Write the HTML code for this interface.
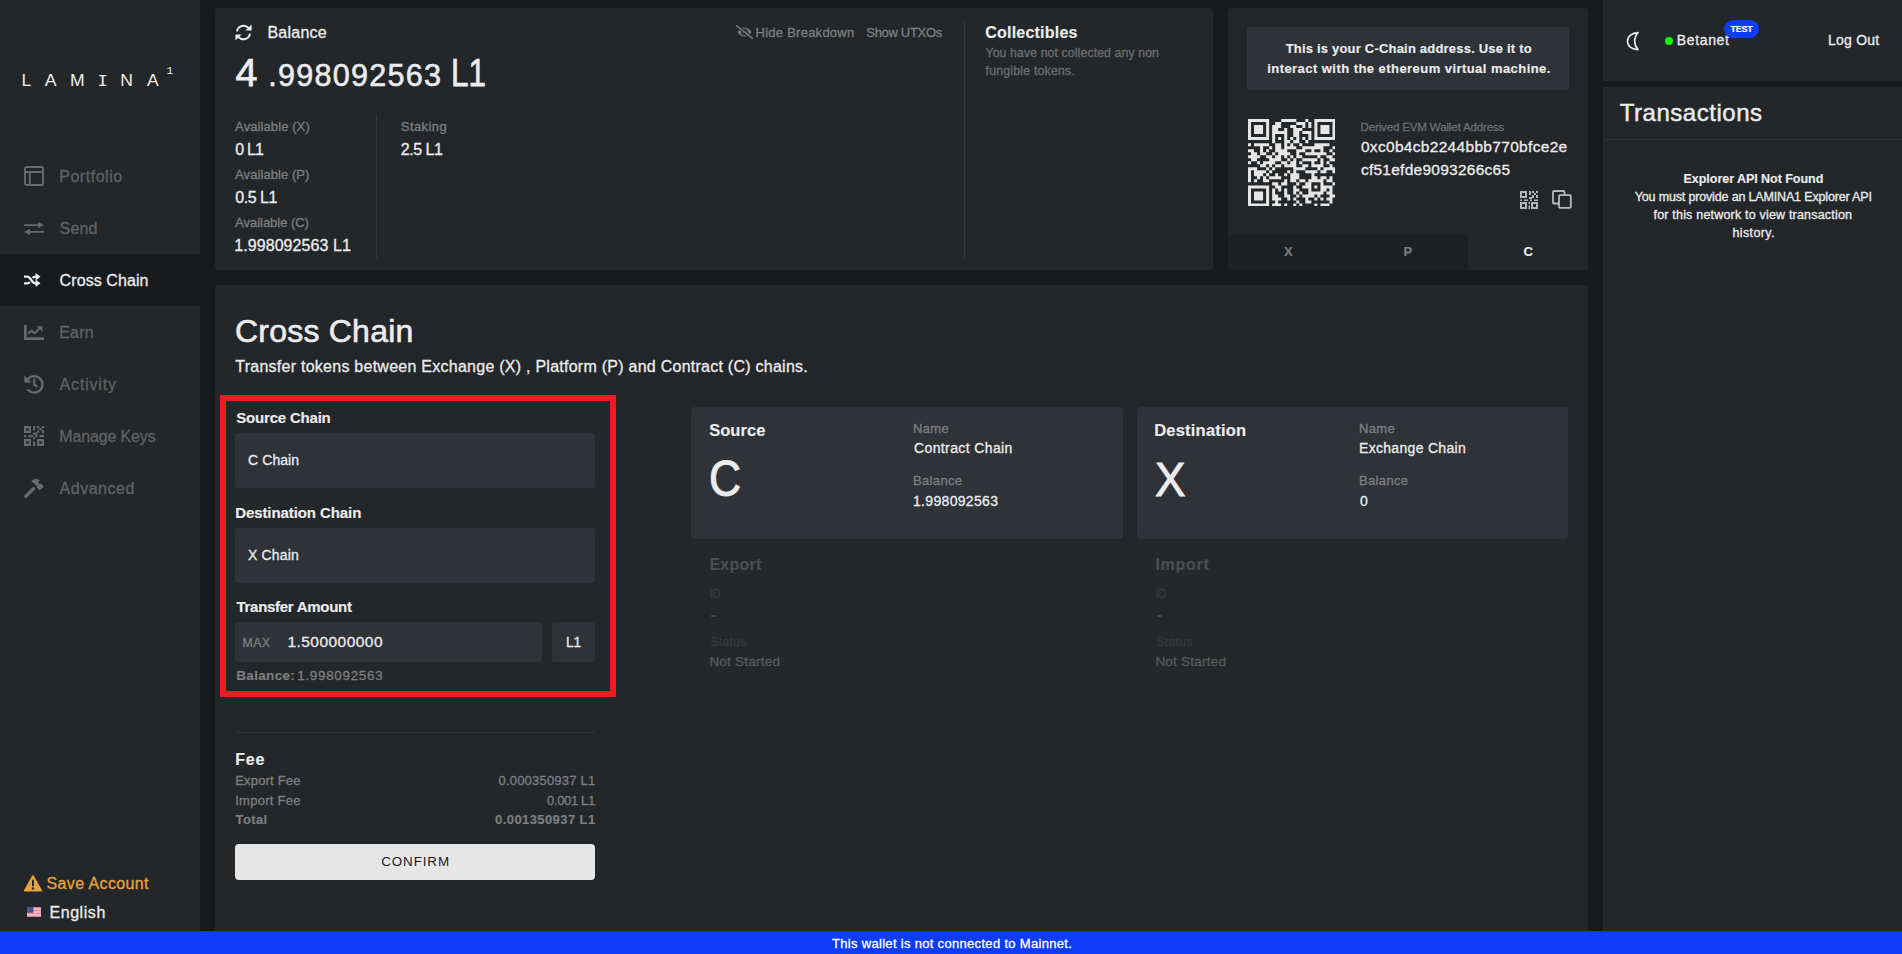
<!DOCTYPE html>
<html lang="en">
<head>
<meta charset="utf-8">
<title>LAMINA1 Wallet - Cross Chain</title>
<style>
*{box-sizing:border-box;margin:0;padding:0}
html,body{width:1902px;height:954px;overflow:hidden;background:#181b1e}
body{position:relative;font-family:"Liberation Sans",sans-serif;color:#ececee}
.t{position:absolute;color:inherit;white-space:nowrap;line-height:1;margin:0;padding:0;border:0;background:none;font-family:inherit;text-decoration:none;display:block;transform-origin:0 50%;-webkit-text-stroke:0.3px}
h1.t,h2.t,h3.t,h4.t{font-weight:400}
</style>
</head>
<body>
<nav id="sidebar">
<div style="position:absolute;left:0px;top:0px;width:200px;height:931px;background:#242729;"></div>
<svg style="position:absolute;left:0;top:55px" width="200" height="40" viewBox="0 55 200 40"><g font-family='"Liberation Sans", sans-serif' font-size="16" fill="#ececee" transform="scale(1.1,1)"><text y="85.6" x="19.6 40.8 63.6">LAM</text><text y="85.6" x="109.3 133.7">NA</text></g><text font-family='"Liberation Mono", monospace' font-size="16.4" fill="#ececee" text-anchor="middle" transform="scale(1.05,1)" x="97.76" y="85.6">I</text><text font-family='"Liberation Mono", monospace' font-size="11.2" fill="#ececee" x="166.4" y="74.1">1</text></svg>
<svg style="position:absolute;left:24px;top:166px;" width="20" height="20" viewBox="0 0 20 20"><rect x="1" y="1" width="18" height="18" rx="1.6" fill="none" stroke="#696a6b" stroke-width="1.9"/><path d="M1 6H19M5.8 6V19" stroke="#696a6b" stroke-width="1.8" fill="none"/></svg>
<a class="t" style="top:169.00px;font-size:16px;color:#5f6266;left:59.20px;letter-spacing:0.537px;">Portfolio</a>
<svg style="position:absolute;left:24px;top:221.6px;" width="20" height="13" viewBox="0 0 20 13"><path d="M0 3.1H15M20 9.9H5" stroke="#696a6b" stroke-width="1.9" fill="none"/><path d="M14 0L20 3.1L14 6.2ZM6 6.8L0 9.9L6 13Z" fill="#696a6b"/></svg>
<a class="t" style="top:221.00px;font-size:16px;color:#5f6266;left:59.60px;letter-spacing:0.174px;">Send</a>
<div style="position:absolute;left:0px;top:254px;width:200px;height:52px;background:#181b1e;"></div>
<svg style="position:absolute;left:24px;top:273px;" width="17" height="14" viewBox="0 0 17 14"><path d="M0 3.7H3.2C4.6 3.7 5.2 4.2 6 5.3L8.6 8.7C9.4 9.8 10 10.3 11.4 10.3H12.4M0 10.3H3.2C4.6 10.3 5.2 9.8 5.8 9M8.8 5C9.4 4.2 10 3.7 11.4 3.7H12.4" stroke="#ececee" stroke-width="2.3" fill="none"/><path d="M11.6 0V7.4L16.5 3.7ZM11.6 6.6V14L16.5 10.3Z" fill="#ececee"/></svg>
<a class="t" style="top:273.00px;font-size:16px;left:59.60px;letter-spacing:0.087px;">Cross Chain</a>
<svg style="position:absolute;left:24px;top:324.8px;" width="20" height="15" viewBox="0 0 20 15"><path d="M1.35 0V13.65H20" stroke="#696a6b" stroke-width="2.7" fill="none"/><path d="M4.6 8.2L7.6 5.4L10.4 8.4L15.6 3.6" stroke="#696a6b" stroke-width="2" fill="none" stroke-linecap="round" stroke-linejoin="round"/><path d="M12.8 1.2H18.4V6.8Z" fill="#696a6b"/></svg>
<a class="t" style="top:325.00px;font-size:16px;color:#5f6266;left:59.20px;letter-spacing:0.201px;">Earn</a>
<svg style="position:absolute;left:24px;top:374px;" width="20" height="20" viewBox="0 0 20 20"><path d="M3 6.6A8.2 8.2 0 1 1 4.2 16" stroke="#696a6b" stroke-width="2.3" fill="none" stroke-linecap="round"/><path d="M0.4 1.6V8.4H7.4Z" fill="#696a6b"/><path d="M10.2 5.6V10.4L12.6 12.3" stroke="#696a6b" stroke-width="2.2" fill="none" stroke-linecap="round"/></svg>
<a class="t" style="top:377.00px;font-size:16px;color:#5f6266;left:59.60px;letter-spacing:0.818px;">Activity</a>
<svg style="position:absolute;left:24px;top:426px;" width="20" height="20" viewBox="0 0 20 20"><g fill="#696a6b"><path fill-rule="evenodd" d="M0 0h7v7h-7zM2.3 2.3v2.4h2.4v-2.4z"/><path fill-rule="evenodd" d="M13 13h7v7h-7zM15.3 15.3v2.4h2.4v-2.4z"/><path fill-rule="evenodd" d="M0 13h7v7h-7zM2.3 15.3v2.4h2.4v-2.4z"/><rect x="9" y="0" width="2.2" height="4.4"/><rect x="13" y="0" width="2.2" height="2.2"/><rect x="17.8" y="0" width="2.2" height="2.2"/><rect x="13" y="4.4" width="2.2" height="2.6"/><rect x="15.2" y="2.2" width="2.6" height="2.2"/><rect x="17.8" y="4.4" width="2.2" height="2.6"/><rect x="9" y="6.6" width="4" height="2.2"/><rect x="0" y="9" width="2.2" height="2.2"/><rect x="4.4" y="9" width="4.6" height="2.2"/><rect x="11" y="9" width="2.2" height="2.2"/><rect x="15.4" y="9" width="4.6" height="2.2"/><rect x="9" y="11.2" width="2.2" height="2.2"/><rect x="9" y="15.4" width="2.2" height="4.6"/></g></svg>
<a class="t" style="top:429.00px;font-size:16px;color:#5f6266;left:59.20px;letter-spacing:-0.134px;">Manage Keys</a>
<svg style="position:absolute;left:24px;top:477.5px;" width="20" height="20" viewBox="0 0 20 20"><path d="M0.6 17.3L9.3 8.6L11.6 10.9L2.9 19.6C2.2 20.2 1.2 20.2 0.6 19.6C0 19 0 18 0.6 17.3Z" fill="#696a6b"/><path d="M7.2 3.2C9.8 0.4 13.6 0.2 16.2 2.6L14.7 3.1C14.2 3.6 14.2 4.4 14.7 4.9L15.8 6L16.8 5.4L19.8 8.4L15.6 12.6L12.6 9.6L13.2 8.6L10.8 6.2C9.8 5.2 8.6 4.2 7.2 3.2Z" fill="#696a6b"/></svg>
<a class="t" style="top:481.00px;font-size:16px;color:#5f6266;left:59.60px;letter-spacing:0.504px;">Advanced</a>
<svg style="position:absolute;left:24px;top:874.5px;" width="18" height="17" viewBox="0 0 18 17"><path d="M9 1.2L17 15.6H1Z" fill="#e6a23c" stroke="#e6a23c" stroke-width="2" stroke-linejoin="round"/><path d="M9 5.4V10.6" stroke="#242729" stroke-width="2" stroke-linecap="round"/><circle cx="9" cy="13.4" r="1.2" fill="#242729"/></svg>
<a class="t" style="top:876.00px;font-size:16px;color:#e6a23c;left:46.50px;letter-spacing:0.382px;">Save Account</a>
<svg style="position:absolute;left:27px;top:907px;border-radius:1.5px;" width="14" height="10" viewBox="0 0 14 10"><rect width="14" height="10" fill="#ecd0d4"/><rect y="0.00" width="14" height="1.43" fill="#e6828e"/><rect y="2.86" width="14" height="1.43" fill="#e6828e"/><rect y="5.71" width="14" height="1.43" fill="#e6828e"/><rect y="8.57" width="14" height="1.43" fill="#e6828e"/><rect width="6.4" height="5.7" fill="#46508a"/></svg>
<div class="t" style="top:905.00px;font-size:16px;left:49.50px;letter-spacing:0.552px;">English</div>
</nav>
<section id="balance-card">
<div style="position:absolute;left:215px;top:8px;width:998px;height:262px;background:#242729;border-radius:4px;"></div>
<svg style="position:absolute;left:234.5px;top:23.5px;" width="17" height="17" viewBox="0 0 17 17"><path d="M2 7.4A6.6 6.6 0 0 1 13.6 4.2M15 9.6A6.6 6.6 0 0 1 3.4 12.8" stroke="#ececee" stroke-width="2" fill="none"/><path d="M16.6 0.4V6.6H10.4ZM0.4 16.6V10.4H6.6Z" fill="#ececee"/></svg>
<h4 class="t" style="top:25.00px;font-size:16px;left:267.40px;letter-spacing:0.245px;font-weight:400;">Balance</h4>
<div class="t" style="top:53.00px;font-size:39.5px;-webkit-text-stroke:0.75px;left:235.50px;">4</div>
<div class="t" style="top:60.00px;font-size:30.6px;-webkit-text-stroke:0.58px;left:268.20px;letter-spacing:1.242px;">.998092563</div>
<div class="t" style="top:53.00px;font-size:39.5px;-webkit-text-stroke:0.75px;left:450.81px;transform:scaleX(0.7956);">L1</div>
<label class="t" style="top:120.00px;font-size:13px;color:#7c7f83;left:235.10px;letter-spacing:0.097px;">Available (X)</label>
<p class="t" style="top:142.00px;font-size:16px;left:235.30px;letter-spacing:-0.847px;">0 L1</p>
<label class="t" style="top:168.00px;font-size:13px;color:#7c7f83;left:235.10px;letter-spacing:0.072px;">Available (P)</label>
<p class="t" style="top:190.00px;font-size:16px;left:235.30px;letter-spacing:-0.477px;">0.5 L1</p>
<label class="t" style="top:216.00px;font-size:13px;color:#7c7f83;left:235.10px;letter-spacing:-0.030px;">Available (C)</label>
<p class="t" style="top:238.00px;font-size:16px;left:234.30px;letter-spacing:0.064px;">1.998092563 L1</p>
<div style="position:absolute;left:375.5px;top:114px;width:1.0px;height:144px;background:#34373b;"></div>
<label class="t" style="top:120.00px;font-size:13px;color:#7c7f83;left:400.80px;letter-spacing:0.409px;">Staking</label>
<p class="t" style="top:142.00px;font-size:16px;left:400.80px;letter-spacing:-0.477px;">2.5 L1</p>
<svg style="position:absolute;left:735.8px;top:24.5px;" width="17" height="14" viewBox="0 0 17 14"><path d="M1.6 7C3.6 3.6 6 2.4 8.5 2.4C11 2.4 13.4 3.6 15.4 7C13.4 10.4 11 11.6 8.5 11.6C6 11.6 3.6 10.4 1.6 7Z" fill="#7c7f83"/><circle cx="8.5" cy="7" r="2.9" fill="none" stroke="#242729" stroke-width="1.3"/><path d="M0.6 0.8L16.4 13.2" stroke="#242729" stroke-width="3.6"/><path d="M0.4 0.6L16.6 13.4" stroke="#7c7f83" stroke-width="1.4" stroke-linecap="round"/></svg>
<button class="t" style="top:26.00px;font-size:13px;color:#7c7f83;left:755.50px;letter-spacing:0.257px;">Hide Breakdown</button>
<button class="t" style="top:26.00px;font-size:13px;color:#7c7f83;left:866.30px;letter-spacing:-0.317px;">Show UTXOs</button>
<div style="position:absolute;left:963.5px;top:20px;width:1.0px;height:238px;background:#34373b;"></div>
<h4 class="t" style="top:25.00px;font-size:16px;font-weight:700;-webkit-text-stroke:0.15px;left:985.30px;letter-spacing:0.208px;">Collectibles</h4>
<p class="t" style="top:47.00px;font-size:12.3px;color:#6b6e72;left:985.50px;letter-spacing:0.102px;">You have not collected any non</p>
<p class="t" style="top:65.00px;font-size:12.3px;color:#6b6e72;left:985.50px;letter-spacing:0.212px;">fungible tokens.</p>
</section>
<section id="address-card">
<div style="position:absolute;left:1228px;top:8px;width:360px;height:262px;background:#242729;border-radius:4px;"></div>
<div style="position:absolute;left:1247px;top:27px;width:322px;height:63px;background:#2f3236;"></div>
<p class="t" style="top:42.00px;font-size:13px;font-weight:700;-webkit-text-stroke:0.15px;left:1285.65px;letter-spacing:0.201px;">This is your C-Chain address. Use it to</p>
<p class="t" style="top:62.00px;font-size:13px;font-weight:700;-webkit-text-stroke:0.15px;left:1267.20px;letter-spacing:0.448px;">interact with the ethereum virtual machine.</p>
<svg style="position:absolute;left:1247.7px;top:118.8px" width="87.5" height="87.5" viewBox="0 0 29 29" ><path fill="#e6e6e6" d="M0 0h1v1h-1zM1 0h1v1h-1zM2 0h1v1h-1zM3 0h1v1h-1zM4 0h1v1h-1zM5 0h1v1h-1zM6 0h1v1h-1zM11 0h1v1h-1zM12 0h1v1h-1zM13 0h1v1h-1zM14 0h1v1h-1zM15 0h1v1h-1zM19 0h1v1h-1zM22 0h1v1h-1zM23 0h1v1h-1zM24 0h1v1h-1zM25 0h1v1h-1zM26 0h1v1h-1zM27 0h1v1h-1zM28 0h1v1h-1zM0 1h1v1h-1zM6 1h1v1h-1zM9 1h1v1h-1zM10 1h1v1h-1zM16 1h1v1h-1zM17 1h1v1h-1zM18 1h1v1h-1zM20 1h1v1h-1zM22 1h1v1h-1zM28 1h1v1h-1zM0 2h1v1h-1zM2 2h1v1h-1zM3 2h1v1h-1zM4 2h1v1h-1zM6 2h1v1h-1zM8 2h1v1h-1zM9 2h1v1h-1zM10 2h1v1h-1zM14 2h1v1h-1zM15 2h1v1h-1zM18 2h1v1h-1zM20 2h1v1h-1zM22 2h1v1h-1zM24 2h1v1h-1zM25 2h1v1h-1zM26 2h1v1h-1zM28 2h1v1h-1zM0 3h1v1h-1zM2 3h1v1h-1zM3 3h1v1h-1zM4 3h1v1h-1zM6 3h1v1h-1zM8 3h1v1h-1zM9 3h1v1h-1zM12 3h1v1h-1zM15 3h1v1h-1zM16 3h1v1h-1zM17 3h1v1h-1zM22 3h1v1h-1zM24 3h1v1h-1zM25 3h1v1h-1zM26 3h1v1h-1zM28 3h1v1h-1zM0 4h1v1h-1zM2 4h1v1h-1zM3 4h1v1h-1zM4 4h1v1h-1zM6 4h1v1h-1zM8 4h1v1h-1zM9 4h1v1h-1zM10 4h1v1h-1zM11 4h1v1h-1zM12 4h1v1h-1zM15 4h1v1h-1zM16 4h1v1h-1zM18 4h1v1h-1zM19 4h1v1h-1zM20 4h1v1h-1zM22 4h1v1h-1zM24 4h1v1h-1zM25 4h1v1h-1zM26 4h1v1h-1zM28 4h1v1h-1zM0 5h1v1h-1zM6 5h1v1h-1zM8 5h1v1h-1zM12 5h1v1h-1zM15 5h1v1h-1zM16 5h1v1h-1zM20 5h1v1h-1zM22 5h1v1h-1zM28 5h1v1h-1zM0 6h1v1h-1zM1 6h1v1h-1zM2 6h1v1h-1zM3 6h1v1h-1zM4 6h1v1h-1zM5 6h1v1h-1zM6 6h1v1h-1zM8 6h1v1h-1zM10 6h1v1h-1zM12 6h1v1h-1zM14 6h1v1h-1zM16 6h1v1h-1zM18 6h1v1h-1zM20 6h1v1h-1zM22 6h1v1h-1zM23 6h1v1h-1zM24 6h1v1h-1zM25 6h1v1h-1zM26 6h1v1h-1zM27 6h1v1h-1zM28 6h1v1h-1zM8 7h1v1h-1zM12 7h1v1h-1zM13 7h1v1h-1zM15 7h1v1h-1zM16 7h1v1h-1zM19 7h1v1h-1zM0 8h1v1h-1zM2 8h1v1h-1zM3 8h1v1h-1zM4 8h1v1h-1zM5 8h1v1h-1zM6 8h1v1h-1zM9 8h1v1h-1zM10 8h1v1h-1zM12 8h1v1h-1zM14 8h1v1h-1zM17 8h1v1h-1zM22 8h1v1h-1zM23 8h1v1h-1zM24 8h1v1h-1zM25 8h1v1h-1zM26 8h1v1h-1zM4 9h1v1h-1zM7 9h1v1h-1zM9 9h1v1h-1zM10 9h1v1h-1zM12 9h1v1h-1zM13 9h1v1h-1zM14 9h1v1h-1zM15 9h1v1h-1zM18 9h1v1h-1zM19 9h1v1h-1zM20 9h1v1h-1zM21 9h1v1h-1zM22 9h1v1h-1zM23 9h1v1h-1zM24 9h1v1h-1zM28 9h1v1h-1zM0 10h1v1h-1zM1 10h1v1h-1zM4 10h1v1h-1zM6 10h1v1h-1zM9 10h1v1h-1zM10 10h1v1h-1zM11 10h1v1h-1zM12 10h1v1h-1zM16 10h1v1h-1zM17 10h1v1h-1zM18 10h1v1h-1zM21 10h1v1h-1zM24 10h1v1h-1zM27 10h1v1h-1zM1 11h1v1h-1zM2 11h1v1h-1zM4 11h1v1h-1zM5 11h1v1h-1zM8 11h1v1h-1zM10 11h1v1h-1zM11 11h1v1h-1zM12 11h1v1h-1zM13 11h1v1h-1zM16 11h1v1h-1zM19 11h1v1h-1zM20 11h1v1h-1zM21 11h1v1h-1zM22 11h1v1h-1zM23 11h1v1h-1zM24 11h1v1h-1zM25 11h1v1h-1zM28 11h1v1h-1zM0 12h1v1h-1zM1 12h1v1h-1zM2 12h1v1h-1zM3 12h1v1h-1zM6 12h1v1h-1zM7 12h1v1h-1zM9 12h1v1h-1zM10 12h1v1h-1zM12 12h1v1h-1zM14 12h1v1h-1zM16 12h1v1h-1zM17 12h1v1h-1zM23 12h1v1h-1zM26 12h1v1h-1zM27 12h1v1h-1zM1 13h1v1h-1zM2 13h1v1h-1zM7 13h1v1h-1zM8 13h1v1h-1zM9 13h1v1h-1zM10 13h1v1h-1zM13 13h1v1h-1zM15 13h1v1h-1zM18 13h1v1h-1zM19 13h1v1h-1zM20 13h1v1h-1zM21 13h1v1h-1zM22 13h1v1h-1zM24 13h1v1h-1zM27 13h1v1h-1zM28 13h1v1h-1zM0 14h1v1h-1zM3 14h1v1h-1zM5 14h1v1h-1zM6 14h1v1h-1zM7 14h1v1h-1zM8 14h1v1h-1zM11 14h1v1h-1zM12 14h1v1h-1zM14 14h1v1h-1zM15 14h1v1h-1zM17 14h1v1h-1zM21 14h1v1h-1zM24 14h1v1h-1zM26 14h1v1h-1zM4 15h1v1h-1zM5 15h1v1h-1zM7 15h1v1h-1zM9 15h1v1h-1zM10 15h1v1h-1zM12 15h1v1h-1zM13 15h1v1h-1zM14 15h1v1h-1zM15 15h1v1h-1zM18 15h1v1h-1zM19 15h1v1h-1zM21 15h1v1h-1zM22 15h1v1h-1zM23 15h1v1h-1zM24 15h1v1h-1zM27 15h1v1h-1zM0 16h1v1h-1zM1 16h1v1h-1zM2 16h1v1h-1zM6 16h1v1h-1zM8 16h1v1h-1zM15 16h1v1h-1zM16 16h1v1h-1zM17 16h1v1h-1zM18 16h1v1h-1zM23 16h1v1h-1zM25 16h1v1h-1zM26 16h1v1h-1zM27 16h1v1h-1zM28 16h1v1h-1zM0 17h1v1h-1zM2 17h1v1h-1zM3 17h1v1h-1zM4 17h1v1h-1zM5 17h1v1h-1zM7 17h1v1h-1zM13 17h1v1h-1zM15 17h1v1h-1zM19 17h1v1h-1zM20 17h1v1h-1zM21 17h1v1h-1zM22 17h1v1h-1zM24 17h1v1h-1zM25 17h1v1h-1zM28 17h1v1h-1zM0 18h1v1h-1zM2 18h1v1h-1zM3 18h1v1h-1zM4 18h1v1h-1zM6 18h1v1h-1zM9 18h1v1h-1zM12 18h1v1h-1zM14 18h1v1h-1zM15 18h1v1h-1zM16 18h1v1h-1zM21 18h1v1h-1zM0 19h1v1h-1zM3 19h1v1h-1zM5 19h1v1h-1zM7 19h1v1h-1zM8 19h1v1h-1zM9 19h1v1h-1zM10 19h1v1h-1zM14 19h1v1h-1zM15 19h1v1h-1zM16 19h1v1h-1zM21 19h1v1h-1zM22 19h1v1h-1zM24 19h1v1h-1zM25 19h1v1h-1zM27 19h1v1h-1zM0 20h1v1h-1zM2 20h1v1h-1zM5 20h1v1h-1zM6 20h1v1h-1zM12 20h1v1h-1zM14 20h1v1h-1zM15 20h1v1h-1zM17 20h1v1h-1zM18 20h1v1h-1zM20 20h1v1h-1zM21 20h1v1h-1zM22 20h1v1h-1zM23 20h1v1h-1zM24 20h1v1h-1zM26 20h1v1h-1zM27 20h1v1h-1zM8 21h1v1h-1zM9 21h1v1h-1zM11 21h1v1h-1zM12 21h1v1h-1zM16 21h1v1h-1zM19 21h1v1h-1zM20 21h1v1h-1zM24 21h1v1h-1zM28 21h1v1h-1zM0 22h1v1h-1zM1 22h1v1h-1zM2 22h1v1h-1zM3 22h1v1h-1zM4 22h1v1h-1zM5 22h1v1h-1zM6 22h1v1h-1zM9 22h1v1h-1zM10 22h1v1h-1zM15 22h1v1h-1zM18 22h1v1h-1zM19 22h1v1h-1zM20 22h1v1h-1zM22 22h1v1h-1zM24 22h1v1h-1zM25 22h1v1h-1zM26 22h1v1h-1zM27 22h1v1h-1zM0 23h1v1h-1zM6 23h1v1h-1zM8 23h1v1h-1zM10 23h1v1h-1zM12 23h1v1h-1zM15 23h1v1h-1zM16 23h1v1h-1zM20 23h1v1h-1zM24 23h1v1h-1zM25 23h1v1h-1zM27 23h1v1h-1zM0 24h1v1h-1zM2 24h1v1h-1zM3 24h1v1h-1zM4 24h1v1h-1zM6 24h1v1h-1zM8 24h1v1h-1zM12 24h1v1h-1zM15 24h1v1h-1zM17 24h1v1h-1zM20 24h1v1h-1zM21 24h1v1h-1zM22 24h1v1h-1zM23 24h1v1h-1zM24 24h1v1h-1zM26 24h1v1h-1zM27 24h1v1h-1zM0 25h1v1h-1zM2 25h1v1h-1zM3 25h1v1h-1zM4 25h1v1h-1zM6 25h1v1h-1zM8 25h1v1h-1zM9 25h1v1h-1zM12 25h1v1h-1zM13 25h1v1h-1zM16 25h1v1h-1zM18 25h1v1h-1zM19 25h1v1h-1zM20 25h1v1h-1zM21 25h1v1h-1zM23 25h1v1h-1zM27 25h1v1h-1zM28 25h1v1h-1zM0 26h1v1h-1zM2 26h1v1h-1zM3 26h1v1h-1zM4 26h1v1h-1zM6 26h1v1h-1zM8 26h1v1h-1zM9 26h1v1h-1zM10 26h1v1h-1zM13 26h1v1h-1zM15 26h1v1h-1zM19 26h1v1h-1zM22 26h1v1h-1zM24 26h1v1h-1zM26 26h1v1h-1zM27 26h1v1h-1zM0 27h1v1h-1zM6 27h1v1h-1zM9 27h1v1h-1zM16 27h1v1h-1zM19 27h1v1h-1zM20 27h1v1h-1zM27 27h1v1h-1zM0 28h1v1h-1zM1 28h1v1h-1zM2 28h1v1h-1zM3 28h1v1h-1zM4 28h1v1h-1zM5 28h1v1h-1zM6 28h1v1h-1zM8 28h1v1h-1zM9 28h1v1h-1zM10 28h1v1h-1zM12 28h1v1h-1zM15 28h1v1h-1zM17 28h1v1h-1zM22 28h1v1h-1zM24 28h1v1h-1zM25 28h1v1h-1zM26 28h1v1h-1z"/></svg>
<p class="t" style="top:122.00px;font-size:11.5px;color:#6b6e72;left:1360.60px;letter-spacing:-0.139px;">Derived EVM Wallet Address</p>
<p class="t" style="top:139.00px;font-size:15.5px;left:1360.90px;letter-spacing:0.314px;">0xc0b4cb2244bbb770bfce2e</p>
<p class="t" style="top:162.00px;font-size:15.5px;left:1360.90px;letter-spacing:0.259px;">cf51efde9093266c65</p>
<svg style="position:absolute;left:1520px;top:191px;" width="18" height="18" viewBox="0 0 18 18"><g fill="#b4b5b7"><path fill-rule="evenodd" d="M0 0h7v7h-7zM2 2v3h3v-3z"/><path fill-rule="evenodd" d="M0 11h7v7h-7zM2 13v3h3v-3z"/><path fill-rule="evenodd" d="M11 11h7v7h-7zM13 13v3h3v-3z"/><rect x="9" y="0" width="2" height="4"/><rect x="12" y="0" width="2" height="2"/><rect x="16" y="0" width="2" height="2"/><rect x="12" y="4" width="2" height="3"/><rect x="14" y="2" width="2" height="2"/><rect x="16" y="4" width="2" height="3"/><rect x="9" y="6" width="3" height="2"/><rect x="0" y="8.5" width="2" height="1.5"/><rect x="4" y="8.5" width="4" height="1.5"/><rect x="10" y="8.5" width="2" height="1.5"/><rect x="14" y="8.5" width="4" height="1.5"/><rect x="8.5" y="11" width="1.5" height="2"/><rect x="8.5" y="14.5" width="1.5" height="3.5"/></g></svg>
<svg style="position:absolute;left:1551.5px;top:190.2px;" width="20" height="19" viewBox="0 0 20 19"><rect x="1" y="1" width="11.5" height="12.5" rx="1" fill="none" stroke="#b9babc" stroke-width="1.8"/><rect x="7" y="5.2" width="11.8" height="12.6" rx="1" fill="#242729" stroke="#b9babc" stroke-width="1.8"/></svg>
<div style="position:absolute;left:1228px;top:234px;width:240px;height:36px;background:#1e2124;border-bottom-left-radius:4px;"></div>
<button class="t" style="top:245.00px;font-size:13px;font-weight:700;-webkit-text-stroke:0.15px;color:#7d7e80;left:1283.90px;">X</button>
<button class="t" style="top:245.00px;font-size:13px;font-weight:700;-webkit-text-stroke:0.15px;color:#7d7e80;left:1403.60px;">P</button>
<button class="t" style="top:245.00px;font-size:13px;font-weight:700;-webkit-text-stroke:0.15px;left:1523.50px;">C</button>
</section>
<aside id="right-panel">
<div style="position:absolute;left:1603px;top:0px;width:299px;height:81px;background:#242729;"></div>
<svg style="position:absolute;left:1626.3px;top:30.8px;" width="15" height="20" viewBox="0 0 15 20"><path d="M12 1.6C6 1.8 1.5 5 1.5 10.2C1.5 15.2 6 18.6 12 18.6C9.8 16.2 8.7 13.4 8.7 10.2C8.7 7 9.8 4 12 1.6Z" stroke="#ececee" stroke-width="1.6" fill="none" stroke-linejoin="round"/></svg>
<div style="position:absolute;left:1664.9px;top:36.8px;width:8.399999999999864px;height:8.400000000000006px;background:#0f0;border-radius:4.2px;"></div>
<button class="t" style="top:33.00px;font-size:14px;left:1676.80px;letter-spacing:0.637px;">Betanet</button>
<div style="position:absolute;left:1724px;top:20px;width:35px;height:18px;background:#0e3cfa;border-radius:9px;"></div>
<div class="t" style="top:25.00px;font-size:9px;font-weight:700;-webkit-text-stroke:0.15px;color:#fff;left:1730.50px;letter-spacing:-0.239px;">TEST</div>
<button class="t" style="top:33.00px;font-size:14px;left:1828.10px;letter-spacing:0.210px;">Log Out</button>
<div style="position:absolute;left:1603px;top:87px;width:299px;height:844px;background:#242729;"></div>
<h2 class="t" style="top:101.00px;font-size:24px;-webkit-text-stroke:0.46px;left:1619.80px;letter-spacing:0.518px;font-weight:400;">Transactions</h2>
<div style="position:absolute;left:1603px;top:139px;width:299px;height:1px;background:#2f3236;"></div>
<p class="t" style="top:173.00px;font-size:12.5px;font-weight:700;-webkit-text-stroke:0.15px;left:1683.55px;letter-spacing:-0.037px;">Explorer API Not Found</p>
<p class="t" style="top:191.00px;font-size:12.5px;left:1634.75px;letter-spacing:-0.160px;">You must provide an LAMINA1 Explorer API</p>
<p class="t" style="top:209.00px;font-size:12.5px;left:1653.50px;letter-spacing:0.194px;">for this network to view transaction</p>
<p class="t" style="top:227.00px;font-size:12.5px;left:1732.40px;letter-spacing:0.385px;">history.</p>
</aside>
<main id="cross-chain">
<div style="position:absolute;left:215px;top:285px;width:1373px;height:646px;background:#242729;border-radius:4px;border-bottom-left-radius:0;border-bottom-right-radius:0;"></div>
<h1 class="t" style="top:315.00px;font-size:32px;-webkit-text-stroke:0.61px;left:235.00px;letter-spacing:0.223px;font-weight:400;">Cross Chain</h1>
<p class="t" style="top:359.00px;font-size:16px;left:235.30px;letter-spacing:0.254px;">Transfer tokens between Exchange (X) , Platform (P) and Contract (C) chains.</p>
<label class="t" style="top:410.00px;font-size:15px;font-weight:700;-webkit-text-stroke:0.15px;left:236.30px;letter-spacing:-0.202px;">Source Chain</label>
<div style="position:absolute;left:235px;top:433px;width:360px;height:55px;background:#2f3236;border-radius:3px;"></div>
<p class="t" style="top:453.00px;font-size:14px;left:248.10px;letter-spacing:0.065px;">C Chain</p>
<label class="t" style="top:505.00px;font-size:15px;font-weight:700;-webkit-text-stroke:0.15px;left:235.20px;letter-spacing:-0.085px;">Destination Chain</label>
<div style="position:absolute;left:235px;top:528px;width:360px;height:55px;background:#2f3236;border-radius:3px;"></div>
<p class="t" style="top:548.00px;font-size:14px;left:248.10px;letter-spacing:0.129px;">X Chain</p>
<label class="t" style="top:599.00px;font-size:15px;font-weight:700;-webkit-text-stroke:0.15px;left:236.50px;letter-spacing:-0.284px;">Transfer Amount</label>
<div style="position:absolute;left:235px;top:622px;width:307px;height:40px;background:#2f3236;border-radius:3px;"></div>
<button class="t" style="top:637.00px;font-size:12.2px;color:#7c7f83;left:242.60px;letter-spacing:0.604px;">MAX</button>
<p class="t" style="top:634.00px;font-size:15.5px;left:287.40px;letter-spacing:0.460px;">1.500000000</p>
<div style="position:absolute;left:552px;top:622px;width:43px;height:40px;background:#2f3236;border-radius:3px;"></div>
<p class="t" style="top:634.00px;font-size:15px;left:566.09px;transform:scaleX(0.9123);">L1</p>
<label class="t" style="top:669.00px;font-size:13.5px;font-weight:700;-webkit-text-stroke:0.15px;color:#7c7f83;left:236.30px;letter-spacing:0.316px;">Balance:</label>
<p class="t" style="top:669.00px;font-size:13.5px;color:#7c7f83;left:297.30px;letter-spacing:0.656px;">1.998092563</p>
<div style="position:absolute;left:220px;top:395px;width:396px;height:302px;box-sizing:border-box;border:6px solid #ed1c24;"></div>
<div style="position:absolute;left:235px;top:732px;width:360px;height:1px;background:#2f3236;"></div>
<h4 class="t" style="top:752.00px;font-size:16px;font-weight:700;-webkit-text-stroke:0.15px;left:235.20px;letter-spacing:0.760px;">Fee</h4>
<label class="t" style="top:774.00px;font-size:13px;color:#7c7f83;left:235.20px;letter-spacing:0.182px;">Export Fee</label>
<p class="t" style="top:774.00px;font-size:13px;color:#7c7f83;left:498.50px;letter-spacing:0.204px;">0.000350937 L1</p>
<label class="t" style="top:794.00px;font-size:13px;color:#7c7f83;left:235.20px;letter-spacing:0.263px;">Import Fee</label>
<p class="t" style="top:794.00px;font-size:13px;color:#7c7f83;left:547.00px;letter-spacing:-0.354px;">0.001 L1</p>
<label class="t" style="top:813.00px;font-size:13px;font-weight:700;-webkit-text-stroke:0.15px;color:#7c7f83;left:235.60px;letter-spacing:0.355px;">Total</label>
<p class="t" style="top:813.00px;font-size:13px;font-weight:700;-webkit-text-stroke:0.15px;color:#7c7f83;left:495.10px;letter-spacing:0.410px;">0.001350937 L1</p>
<div style="position:absolute;left:235px;top:844px;width:360px;height:36px;background:#e6e6e6;border-radius:4px;"></div>
<button class="t" style="top:855.00px;font-size:13.4px;color:#181b1e;left:381.20px;letter-spacing:0.895px;-webkit-text-stroke:0;">CONFIRM</button>
<div style="position:absolute;left:691px;top:407px;width:432px;height:132px;background:#2f3236;border-radius:4px;"></div>
<h3 class="t" style="top:422.00px;font-size:16.5px;font-weight:700;-webkit-text-stroke:0.15px;left:709.20px;letter-spacing:0.048px;">Source</h3>
<p class="t" style="top:455.00px;font-size:49.6px;-webkit-text-stroke:0.94px;left:709.01px;transform:scaleX(0.8965);">C</p>
<label class="t" style="top:422.00px;font-size:13px;color:#7c7f83;left:913.00px;letter-spacing:0.314px;">Name</label>
<p class="t" style="top:441.00px;font-size:14px;left:914.00px;letter-spacing:0.384px;">Contract Chain</p>
<label class="t" style="top:474.00px;font-size:13px;color:#7c7f83;left:913.00px;letter-spacing:0.341px;">Balance</label>
<p class="t" style="top:494.00px;font-size:14px;left:913.00px;letter-spacing:0.322px;">1.998092563</p>
<div style="position:absolute;left:691px;top:539px;width:432px;height:149px;background:#25282b;border-radius:4px;"></div>
<h3 class="t" style="top:557.00px;font-size:16px;font-weight:700;-webkit-text-stroke:0.15px;color:#4b4e52;left:709.40px;letter-spacing:0.231px;">Export</h3>
<label class="t" style="top:588.00px;font-size:12px;color:#36393d;left:709.40px;letter-spacing:-0.634px;">ID</label>
<p class="t" style="top:607.00px;font-size:16px;font-weight:700;-webkit-text-stroke:0.15px;color:#46494d;left:710.40px;">-</p>
<label class="t" style="top:636.00px;font-size:12px;color:#36393d;left:710.40px;letter-spacing:0.394px;">Status</label>
<p class="t" style="top:655.00px;font-size:13.5px;color:#585a5d;left:709.40px;letter-spacing:0.221px;">Not Started</p>
<div style="position:absolute;left:1137px;top:407px;width:431px;height:132px;background:#2f3236;border-radius:4px;"></div>
<h3 class="t" style="top:422.00px;font-size:16.5px;font-weight:700;-webkit-text-stroke:0.15px;left:1154.20px;letter-spacing:0.214px;">Destination</h3>
<p class="t" style="top:455.00px;font-size:48.4px;-webkit-text-stroke:0.92px;left:1154.85px;transform:scaleX(0.9450);">X</p>
<label class="t" style="top:422.00px;font-size:13px;color:#7c7f83;left:1359.00px;letter-spacing:0.314px;">Name</label>
<p class="t" style="top:441.00px;font-size:14px;left:1359.00px;letter-spacing:0.310px;">Exchange Chain</p>
<label class="t" style="top:474.00px;font-size:13px;color:#7c7f83;left:1359.00px;letter-spacing:0.341px;">Balance</label>
<p class="t" style="top:494.00px;font-size:14px;left:1360.00px;">0</p>
<div style="position:absolute;left:1137px;top:539px;width:431px;height:149px;background:#25282b;border-radius:4px;"></div>
<h3 class="t" style="top:557.00px;font-size:16px;font-weight:700;-webkit-text-stroke:0.15px;color:#4b4e52;left:1155.40px;letter-spacing:0.709px;">Import</h3>
<label class="t" style="top:588.00px;font-size:12px;color:#36393d;left:1155.40px;letter-spacing:-0.634px;">ID</label>
<p class="t" style="top:607.00px;font-size:16px;font-weight:700;-webkit-text-stroke:0.15px;color:#46494d;left:1156.40px;">-</p>
<label class="t" style="top:636.00px;font-size:12px;color:#36393d;left:1156.40px;letter-spacing:0.394px;">Status</label>
<p class="t" style="top:655.00px;font-size:13.5px;color:#585a5d;left:1155.40px;letter-spacing:0.221px;">Not Started</p>
</main>
<div style="position:absolute;left:0px;top:931px;width:1902px;height:23px;background:#0e3cfa;"></div><div class="t" style="top:937.00px;font-size:13px;color:#ffffff;left:831.95px;letter-spacing:0.315px;">This wallet is not connected to Mainnet.</div>
</body>
</html>
